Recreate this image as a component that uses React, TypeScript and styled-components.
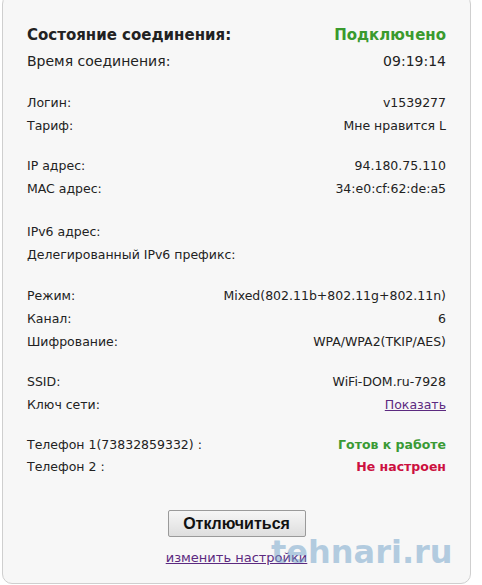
import React from "react";
import styled, { createGlobalStyle } from "styled-components";

const Global = createGlobalStyle`
  html, body { margin: 0; padding: 0; background: #ffffff; overflow: hidden; }
  body { font-family: "DejaVu Sans", Verdana, sans-serif; color: #222; }
`;

const Page = styled.div`
  width: 482px;
  height: 585px;
  overflow: hidden;
`;

const Panel = styled.div`
  position: relative;
  box-sizing: border-box;
  width: 469px;
  height: 590px;
  margin: -6px 0 0 2px;
  padding: 27px 24px 0 24px;
  background: #f7f7f7;
  border: 1px solid #cfcfcf;
  border-radius: 10px;
  display: flex;
  flex-direction: column;
`;

const Group = styled.div<{ $gap: number }>`
  display: flex;
  flex-direction: column;
  margin-bottom: ${(p) => p.$gap}px;
`;

const Row = styled.div<{ $size: number; $lh: number; $bold?: boolean }>`
  display: flex;
  justify-content: space-between;
  align-items: center;
  height: ${(p) => p.$lh}px;
  font-size: ${(p) => p.$size}px;
  font-weight: ${(p) => (p.$bold ? 700 : 400)};
  white-space: nowrap;
`;

const Value = styled.span<{ $color?: string; $bold?: boolean }>`
  color: ${(p) => p.$color || "#222"};
  font-weight: ${(p) => (p.$bold ? 700 : "inherit")};
`;

const Link = styled.a`
  color: #5c2a80;
  text-decoration: underline;
  cursor: pointer;
`;

const Actions = styled.div`
  display: flex;
  flex-direction: column;
  align-items: center;
  gap: 13px;
  margin-top: 33px;
`;

const Button = styled.button`
  width: 138px;
  height: 27px;
  padding: 0;
  border: 1px solid #9a9a9a;
  border-radius: 2px;
  background: linear-gradient(#f6f6f6, #dedede);
  font-family: "Liberation Sans", Arial, sans-serif;
  font-weight: 700;
  font-size: 16px;
  color: #111;
`;

const SmallLink = styled(Link)`
  font-size: 13px;
`;

const Watermark = styled.div`
  position: absolute;
  left: 268px;
  top: 538px;
  font-family: "DejaVu Sans", Verdana, sans-serif;
  font-weight: 700;
  font-size: 32px;
  color: rgba(110, 160, 200, 0.5);
  pointer-events: none;
`;

type R = { l: string; v?: React.ReactNode; c?: string; b?: boolean };

const S = 12.5;

const groups: { size: number; lh: number; gap: number; rows: R[] }[] = [
  { size: 14, lh: 26, gap: 17, rows: [{ l: "Время соединения:", v: "09:19:14" }] },
  { size: S, lh: 23, gap: 17, rows: [{ l: "Логин:", v: "v1539277" }, { l: "Тариф:", v: "Мне нравится L" }] },
  { size: S, lh: 23, gap: 20, rows: [{ l: "IP адрес:", v: "94.180.75.110" }, { l: "MAC адрес:", v: "34:e0:cf:62:de:a5" }] },
  { size: S, lh: 23, gap: 18, rows: [{ l: "IPv6 адрес:" }, { l: "Делегированный IPv6 префикс:" }] },
  {
    size: S,
    lh: 23,
    gap: 17,
    rows: [
      { l: "Режим:", v: "Mixed(802.11b+802.11g+802.11n)" },
      { l: "Канал:", v: "6" },
      { l: "Шифрование:", v: "WPA/WPA2(TKIP/AES)" },
    ],
  },
  { size: S, lh: 23, gap: 17, rows: [{ l: "SSID:", v: "WiFi-DOM.ru-7928" }, { l: "Ключ сети:", v: <Link>Показать</Link> }] },
  {
    size: S,
    lh: 22,
    gap: 0,
    rows: [
      { l: "Телефон 1(73832859332) :", v: "Готов к работе", c: "#3a9a35", b: true },
      { l: "Телефон 2 :", v: "Не настроен", c: "#cc1040", b: true },
    ],
  },
];

export default function App() {
  return (
    <Page>
      <Global />
      <Panel>
        <Row $size={15} $lh={26} $bold>
          <span>Состояние соединения:</span>
          <Value $color="#3a9a2e">Подключено</Value>
        </Row>
        {groups.map((g, i) => (
          <Group key={i} $gap={g.gap}>
            {g.rows.map((r) => (
              <Row key={r.l} $size={g.size} $lh={g.lh}>
                <span>{r.l}</span>
                {r.v !== undefined && (
                  <Value $color={r.c} $bold={r.b}>
                    {r.v}
                  </Value>
                )}
              </Row>
            ))}
          </Group>
        ))}
        <Actions>
          <Button>Отключиться</Button>
          <SmallLink>изменить настройки</SmallLink>
        </Actions>
        <Watermark>tehnari.ru</Watermark>
      </Panel>
    </Page>
  );
}
